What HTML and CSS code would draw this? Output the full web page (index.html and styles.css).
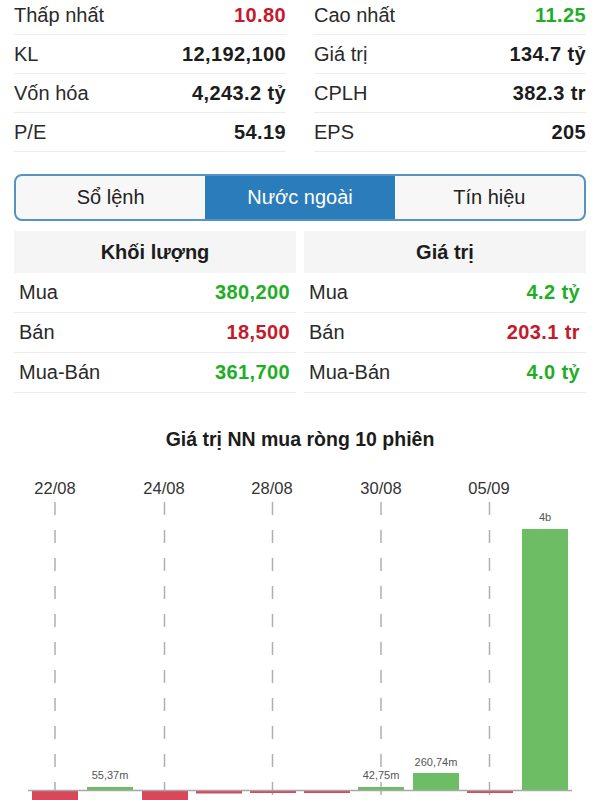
FILE: index.html
```html
<!DOCTYPE html>
<html lang="vi">
    <head>
        <meta charset="UTF-8">
        <title>Nước ngoài</title>
        <link rel="stylesheet" href="styles.css">
    </head>
    <body>
        <div class="stats">
            <div class="col">
                <div class="row"><span>Thấp nhất</span><b class="down">10.80</b></div>
                <div class="row"><span>KL</span><b>12,192,100</b></div>
                <div class="row"><span>Vốn hóa</span><b>4,243.2 tỷ</b></div>
                <div class="row"><span>P/E</span><b>54.19</b></div>
            </div>
            <div class="col">
                <div class="row"><span>Cao nhất</span><b class="up">11.25</b></div>
                <div class="row"><span>Giá trị</span><b>134.7 tỷ</b></div>
                <div class="row"><span>CPLH</span><b>382.3 tr</b></div>
                <div class="row"><span>EPS</span><b>205</b></div>
            </div>
        </div>

        <ul class="tabs">
            <li>Sổ lệnh</li>
            <li class="active">Nước ngoài</li>
            <li>Tín hiệu</li>
        </ul>

        <div class="foreign">
            <div class="col">
                <div class="head">Khối lượng</div>
                <div class="row"><span>Mua</span><b class="up">380,200</b></div>
                <div class="row"><span>Bán</span><b class="down">18,500</b></div>
                <div class="row"><span>Mua-Bán</span><b class="up">361,700</b></div>
            </div>
            <div class="col">
                <div class="head">Giá trị</div>
                <div class="row"><span>Mua</span><b class="up">4.2 tỷ</b></div>
                <div class="row"><span>Bán</span><b class="down">203.1 tr</b></div>
                <div class="row"><span>Mua-Bán</span><b class="up">4.0 tỷ</b></div>
            </div>
        </div>

        <h2 class="chart-title">Giá trị NN mua ròng 10 phiên</h2>
        <svg class="chart" width="600" height="340" viewBox="0 0 600 340">
            <g class="dates">
                <text x="55" y="34">22/08</text>
                <text x="164" y="34">24/08</text>
                <text x="272" y="34">28/08</text>
                <text x="381" y="34">30/08</text>
                <text x="489" y="34">05/09</text>
            </g>
            <g class="grid">
                <line x1="55" y1="42" x2="55" y2="340"/>
                <line x1="164.5" y1="42" x2="164.5" y2="340"/>
                <line x1="272.5" y1="42" x2="272.5" y2="340"/>
                <line x1="381" y1="42" x2="381" y2="340"/>
                <line x1="489.5" y1="42" x2="489.5" y2="340"/>
            </g>
            <g class="bars">
                <rect class="neg" x="32" y="331" width="46" height="14"/>
                <rect class="pos" x="87" y="327" width="46" height="3.5"/>
                <rect class="neg" x="142" y="331" width="46" height="14"/>
                <rect class="neg" x="196" y="331" width="46" height="2.5"/>
                <rect class="neg" x="250" y="331" width="46" height="2"/>
                <rect class="neg" x="304" y="331" width="46" height="2"/>
                <rect class="pos" x="358" y="327" width="46" height="3.5"/>
                <rect class="pos" x="413" y="313" width="46" height="17.5"/>
                <rect class="neg" x="467" y="331" width="46" height="2"/>
                <rect class="pos" x="522" y="69" width="46" height="261.5"/>
            </g>
            <line class="axis" x1="28" y1="330.5" x2="572" y2="330.5"/>
            <g class="labels">
                <text x="110" y="319">55,37m</text>
                <text x="381" y="319">42,75m</text>
                <text x="436" y="306">260,74m</text>
                <text x="545" y="61">4b</text>
            </g>
        </svg>
    </body>
</html>
```

FILE: styles.css
```css
*{
    padding: 0px;
    margin: 0px;
    box-sizing: border-box;
}
body{
    background: #fff;
    color: #2a2a2a;
    font-family: "Liberation Sans", Arial, sans-serif;
    font-size: 20px;
    overflow: hidden;
}
b{
    color: #1c1c1c;
    letter-spacing: 0.4px;
}
.up{
    color: #1eae25;
}
.down{
    color: #c41a2c;
}

/* thong tin co ban */
.stats{
    display: grid;
    grid-template-columns: 1fr 1fr;
    column-gap: 28px;
    margin: -4px 14px 0;
}
.stats .row,.foreign .row{
    display: flex;
    justify-content: space-between;
    align-items: center;
    height: 39px;
    border-bottom: 1px solid #ececec;
}

/* tab */
.tabs{
    display: grid;
    grid-template-columns: 1fr 1fr 1fr;
    margin: 22px 14px 0;
    height: 47px;
    border: 2px solid #5593c6;
    border-radius: 8px;
    overflow: hidden;
    list-style: none;
    background: #f7f7f7;
}
.tabs li{
    display: flex;
    align-items: center;
    justify-content: center;
    color: #222;
}
.tabs li.active{
    background: #2b7cba;
    color: #fff;
}

/* nuoc ngoai */
.foreign{
    display: grid;
    grid-template-columns: 1fr 1fr;
    column-gap: 8px;
    margin: 10px 14px 0;
}
.foreign .head{
    height: 42px;
    line-height: 42px;
    text-align: center;
    font-weight: bold;
    color: #1c1c1c;
    background: #f5f5f5;
}
.foreign .row{
    height: 40px;
    padding: 0 6px 0 5px;
}

/* bieu do */
.chart-title{
    margin-top: 34px;
    height: 24px;
    line-height: 24px;
    text-align: center;
    font-size: 19.5px;
    color: #1c1c1c;
}
.chart{
    display: block;
    margin-top: 9px;
}
.dates text{
    font-size: 16.5px;
    fill: #333;
    text-anchor: middle;
}
.grid line{
    stroke: #b0b0b0;
    stroke-width: 1.5;
    stroke-dasharray: 13 15;
}
.axis{
    stroke: #a8a8a8;
    stroke-width: 1.5;
}
.bars .pos{
    fill: #6cbd64;
}
.bars .neg{
    fill: #d9475a;
}
.labels text{
    font-size: 11px;
    fill: #555;
    text-anchor: middle;
}
```
